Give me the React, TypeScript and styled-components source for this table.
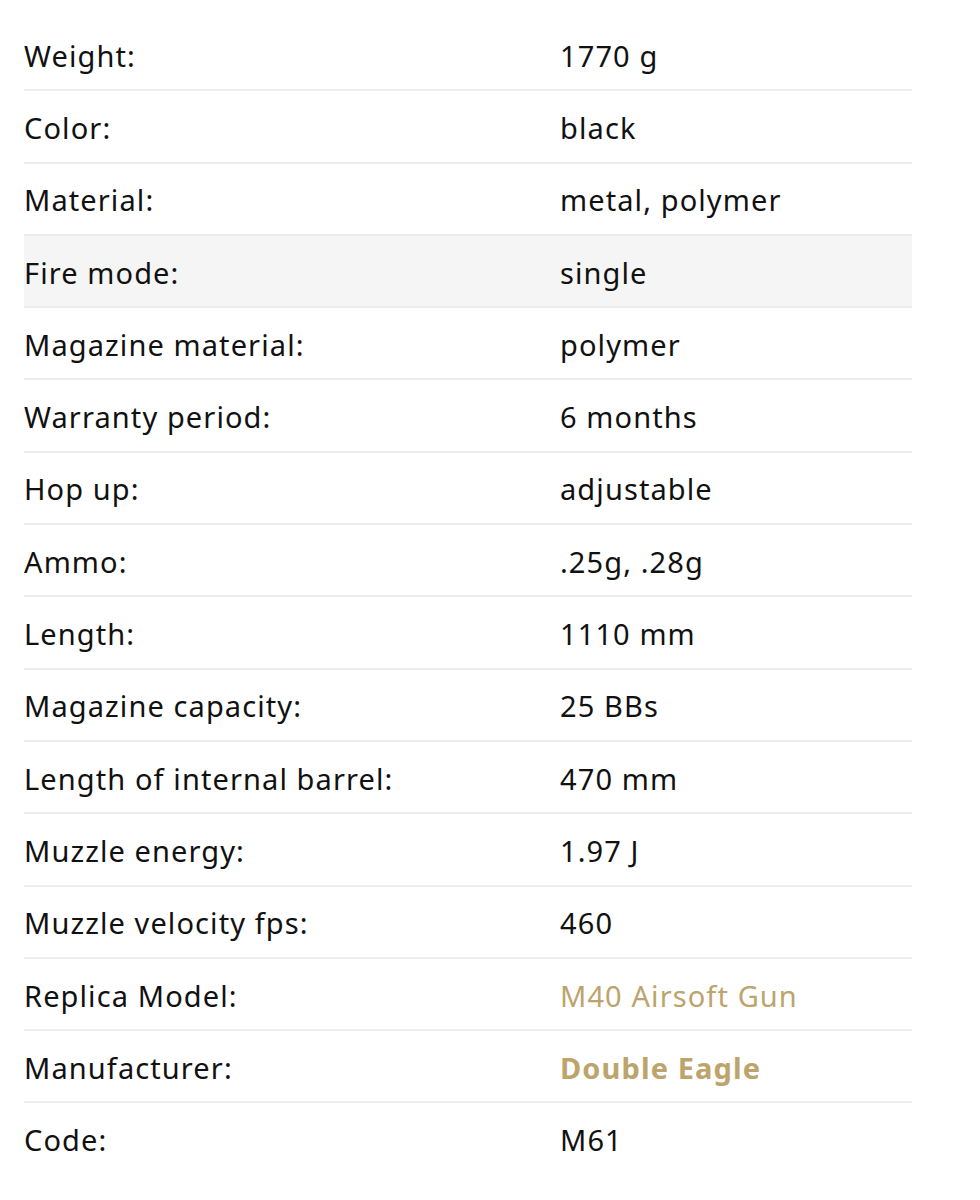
import React from "react";
import styled, { createGlobalStyle } from "styled-components";

type Spec = { label: string; value: string; kind?: "link" | "brand"; active?: boolean };

const specs: Spec[] = [
  { label: "Weight:", value: "1770 g" },
  { label: "Color:", value: "black" },
  { label: "Material:", value: "metal, polymer" },
  { label: "Fire mode:", value: "single", active: true },
  { label: "Magazine material:", value: "polymer" },
  { label: "Warranty period:", value: "6 months" },
  { label: "Hop up:", value: "adjustable" },
  { label: "Ammo:", value: ".25g, .28g" },
  { label: "Length:", value: "1110 mm" },
  { label: "Magazine capacity:", value: "25 BBs" },
  { label: "Length of internal barrel:", value: "470 mm" },
  { label: "Muzzle energy:", value: "1.97 J" },
  { label: "Muzzle velocity fps:", value: "460" },
  { label: "Replica Model:", value: "M40 Airsoft Gun", kind: "link" },
  { label: "Manufacturer:", value: "Double Eagle", kind: "brand" },
  { label: "Code:", value: "M61" },
];

export default function App() {
  return (
    <>
      <GlobalStyle />
      <Page>
        <Table>
          {specs.map((s, i) => (
            <Row key={s.label} $active={s.active} $last={i === specs.length - 1}>
              <Label>{s.label}</Label>
              <Value $kind={s.kind}>{s.value}</Value>
            </Row>
          ))}
        </Table>
      </Page>
    </>
  );
}

const GlobalStyle = createGlobalStyle`
  body {
    margin: 0;
    background: #fff;
    font-family: "Noto Sans", "DejaVu Sans", sans-serif;
  }
`;

const Page = styled.div`
  padding: 19px 0 0 24px;
`;

const Table = styled.div`
  width: 888px;
  display: flex;
  flex-direction: column;
`;

const Row = styled.div<{ $active?: boolean; $last?: boolean }>`
  display: grid;
  grid-template-columns: 536px 1fr;
  align-items: center;
  box-sizing: border-box;
  height: 72.3px;
  padding-top: 2px;
  border-bottom: 2px solid ${p => (p.$last ? "transparent" : "#ececec")};
  background: ${p => (p.$active ? "#f5f5f5" : "transparent")};
  font-size: 29px;
  letter-spacing: 1.1px;
  color: #111;
`;

const Label = styled.div``;

const Value = styled.div<{ $kind?: "link" | "brand" }>`
  color: ${p => (p.$kind ? "#bca46c" : "#111")};
  font-weight: ${p => (p.$kind === "brand" ? 700 : 400)};
`;
